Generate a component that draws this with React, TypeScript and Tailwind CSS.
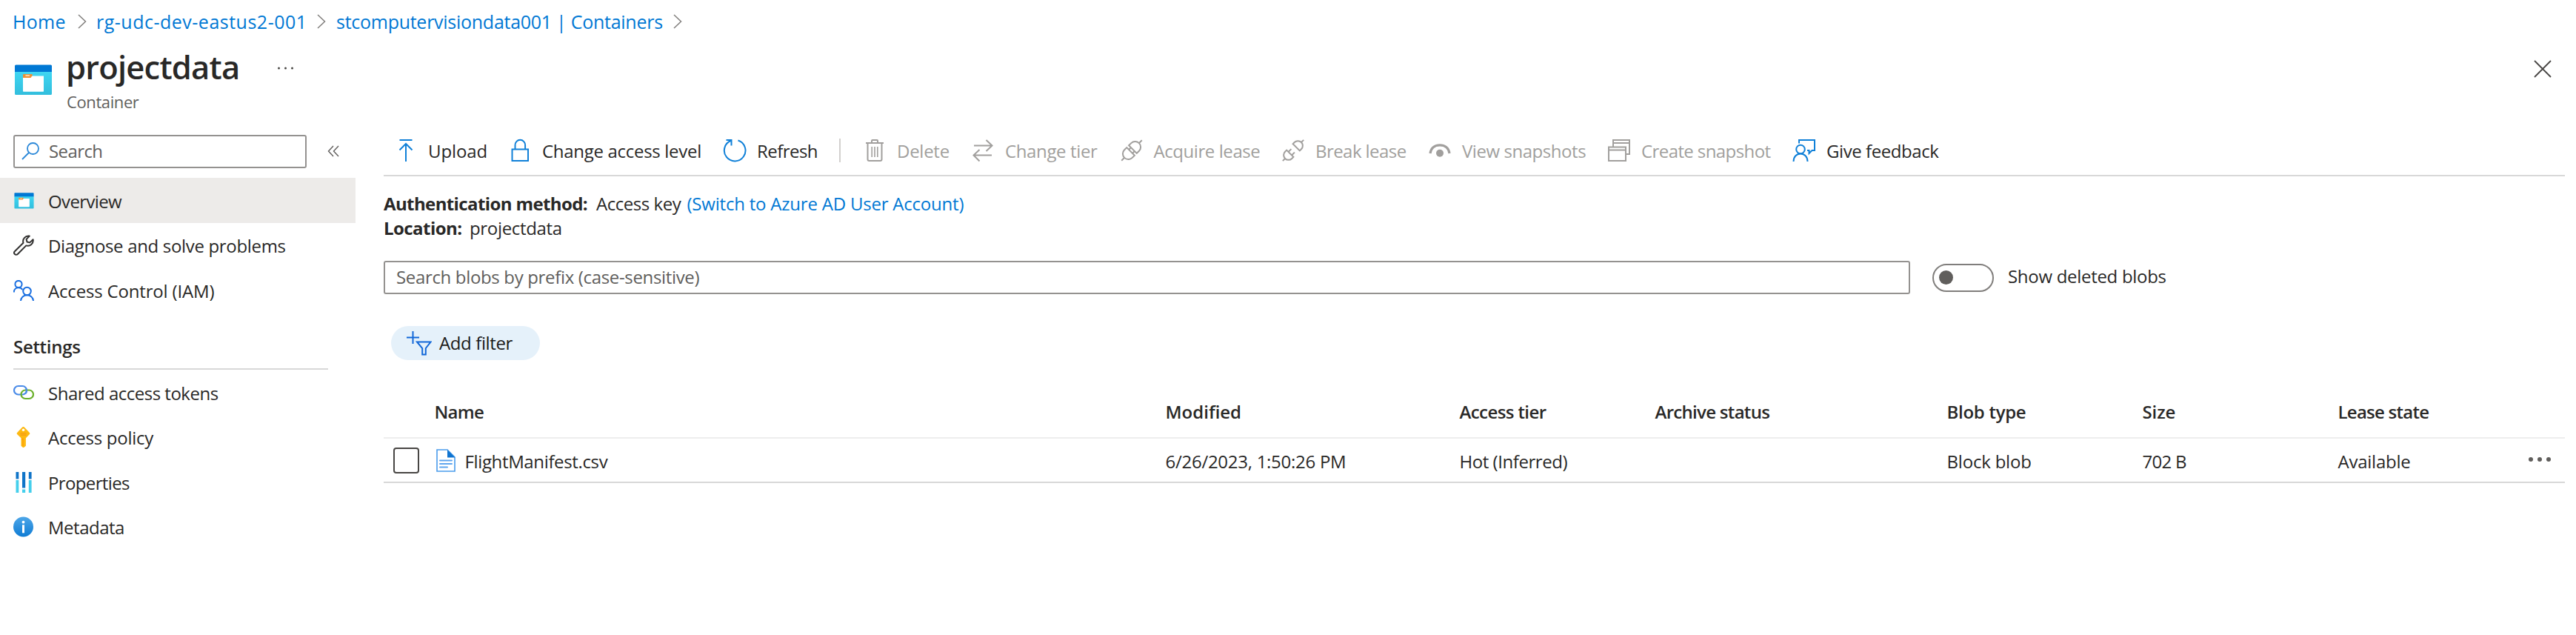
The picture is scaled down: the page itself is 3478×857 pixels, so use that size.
import type { ReactNode } from "react";

function Svg({ className, box = "0 0 32 32", children }: { className: string; box?: string; children: ReactNode }) {
  return (
    <svg className={`shrink-0 ${className}`} viewBox={box} fill="none" aria-hidden="true">
      {children}
    </svg>
  );
}

function ContainerIcon({ className, id }: { className: string; id: string }) {
  return (
    <Svg className={className} box="0 0 50 42">
      <defs>
        <linearGradient id={id} x1="0" y1="0" x2="0" y2="1">
          <stop offset="0" stopColor="#3fd6f2" />
          <stop offset="1" stopColor="#32bedd" />
        </linearGradient>
      </defs>
      <path d="M0 9h50v30.500a1.500 1.500 0 0 1-1.500 1.500h-47A1.500 1.500 0 0 1 0 39.500z" fill={`url(#${id})`} />
      <path d="M1.500 .5h47A1.500 1.500 0 0 1 50 2v8H0V2A1.500 1.500 0 0 1 1.500 .5z" fill="#0078d4" />
      <path d="M11 15.500h28V36a.8.800 0 0 1-.8.800H11.800A.8.800 0 0 1 11 36z" fill="#fff" />
      <path d="M12 13h10.500a1.500 1.500 0 0 1 1.500 1.500L21.500 18H11v-4a1 1 0 0 1 1-1z" fill="#ef9034" />
      <path d="M15 15h4.500" stroke="#fde3c4" strokeWidth="1.500" strokeLinecap="round" />
    </Svg>
  );
}

function Chevron() {
  return (
    <Svg className="h-5 w-3" box="0 0 12 20">
      <path d="M1 1l9.500 9L1 19" stroke="#807e7c" strokeWidth="1.500" />
    </Svg>
  );
}

const toolBlue = "#1080d8";
const toolGray = "#a19f9d";

const icons = {
  upload: (
    <g stroke={toolBlue} strokeWidth="2">
      <path d="M7.500 2h17M16 31V7M7.500 15.500L16 7l8.500 8.500" />
    </g>
  ),
  lock: (
    <g stroke={toolBlue} strokeWidth="2">
      <path d="M5.500 14.500h21.500V30H5.500z" />
      <path d="M9.500 14.500V9a6.800 7.200 0 0 1 13.600 0v5.500" />
    </g>
  ),
  refresh: (
    <g stroke={toolBlue} strokeWidth="2">
      <path d="M20.500 2.500a14.300 14.300 0 1 1-9.500 .3" />
      <path d="M4.500 2h7v7.500" />
    </g>
  ),
  trash: (
    <g stroke={toolGray} strokeWidth="2">
      <path d="M4 6h24M6.500 6v22a2 2 0 0 0 2 2h15a2 2 0 0 0 2-2V6M12 6V3a1 1 0 0 1 1-1h6a1 1 0 0 1 1 1v3" />
      <path d="M12.200 11v14M16 11v14M19.800 11v14" strokeWidth="1.600" />
    </g>
  ),
  tier: (
    <g stroke={toolGray} strokeWidth="2">
      <path d="M4 9.500h24M20.500 2l8 7.500-8 7.500M28 22.500H3.500M11.500 15l-8 7.500 8 8" />
    </g>
  ),
  acquire: (
    <g stroke={toolGray} strokeWidth="2" transform="rotate(-45 16 16)">
      <path d="M-3.500 16h6M29.500 16h6" />
      <path d="M14 8.500H9.500a7.500 7.500 0 0 0 0 15H14zM18 8.500h4.500a7.500 7.500 0 0 1 0 15H18z" />
      <path d="M14 12.500h4M14 19.500h4" />
    </g>
  ),
  breakLease: (
    <g stroke={toolGray} strokeWidth="2" transform="rotate(-45 16 16)">
      <path d="M-4 16h4.500M31.500 16h4.500" />
      <path d="M10 9.500H7a6.500 6.500 0 0 0 0 13h3zM22 9.500h3a6.500 6.500 0 0 1 0 13h-3z" />
      <path d="M10 12.800h5.500M10 19.200h5.500" />
    </g>
  ),
  view: (
    <g>
      <path d="M3 20C4 12.500 9.500 8.800 16 8.800S28 12.500 29 20" stroke={toolGray} strokeWidth="3.200" />
      <circle cx="16" cy="19.800" r="5" fill={toolGray} />
    </g>
  ),
  create: (
    <g stroke={toolGray} strokeWidth="2">
      <path d="M2 11.500h23V30H2zM2 15.500h23" />
      <path d="M8 11V2h22v19h-5M8 6h22" />
    </g>
  ),
  feedback: (
    <g stroke={toolBlue} strokeWidth="2">
      <circle cx="11" cy="14.500" r="5.800" />
      <path d="M1.500 31c0-6.500 4.300-10.500 9.500-10.500s9.500 4 9.500 10.500" />
      <path d="M9 6.500V2h21v14h-3.500l-4 4v-4H20" />
    </g>
  ),
};

const leftTools = [
  { icon: icons.upload, label: "Upload", item: "w-[154px]", text: "tracking-[-0.1px]" },
  { icon: icons.lock, label: "Change access level", item: "w-[290px]", text: "tracking-[-0.3px]" },
  { icon: icons.refresh, label: "Refresh", item: "w-[157px]", text: "tracking-[-0.55px]" },
];

const rightTools = [
  { icon: icons.trash, label: "Delete", item: "w-[146px] text-[#a19f9d]", text: "tracking-[-0.27px]" },
  { icon: icons.tier, label: "Change tier", item: "w-[200.5px] text-[#a19f9d]", text: "tracking-[-0.36px]" },
  { icon: icons.acquire, label: "Acquire lease", item: "w-[218.5px] text-[#a19f9d]", text: "tracking-[-0.43px]" },
  { icon: icons.breakLease, label: "Break lease", item: "w-[198px] text-[#a19f9d]", text: "tracking-[-0.56px]" },
  { icon: icons.view, label: "View snapshots", item: "w-[242px] text-[#a19f9d]", text: "tracking-[-0.45px]" },
  { icon: icons.create, label: "Create snapshot", item: "w-[250px] text-[#a19f9d]", text: "tracking-[-0.59px]" },
  { icon: icons.feedback, label: "Give feedback", item: "w-[220px]", text: "tracking-[-0.43px]" },
];

function Tool({ icon, label, item, text }: { icon: ReactNode; label: string; item: string; text: string }) {
  return (
    <button className={`flex shrink-0 items-center gap-[14px] ${item}`}>
      <Svg className="size-8">{icon}</Svg>
      <span className={`pt-px leading-8 ${text}`}>{label}</span>
    </button>
  );
}

const topNav = [
  { icon: <ContainerIcon className="ml-px h-[22px] w-[27px]" id="nav-container" />, label: "Overview", text: "tracking-[-0.62px]", row: "bg-[#edebe9]" },
  {
    icon: (
      <Svg className="size-7" box="0 0 28 28">
        <path
          d="M21.800 1.600a7.200 7.200 0 0 0-8.300 9.200L1.900 22.200a2.700 2.700 0 0 0 0 3.800 2.700 2.700 0 0 0 3.900 0L17.300 14.400a7.200 7.200 0 0 0 9.300-8.200l-4.400 4.200-3.700-.9-.9-3.600z"
          stroke="#323130"
          strokeWidth="2"
          strokeLinejoin="round"
        />
      </Svg>
    ),
    label: "Diagnose and solve problems",
    text: "tracking-[-0.33px]",
    row: "",
  },
  {
    icon: (
      <Svg className="size-7" box="0 0 28 28">
        <g stroke="#1a6fe0" strokeWidth="2">
          <circle cx="7" cy="5.500" r="4.600" />
          <circle cx="18.500" cy="15" r="5.300" />
          <path d="M.8 16.500C.8 12.500 3.500 10.200 7 10.200c2.300 0 4.200 1 5.300 2.700M10 28c.3-4.500 3.800-7.700 8.500-7.700s8.200 3.200 8.500 7.700" />
        </g>
      </Svg>
    ),
    label: "Access Control (IAM)",
    text: "tracking-[-0.17px]",
    row: "",
  },
];

const settingsNav = [
  {
    icon: (
      <Svg className="size-7" box="0 0 28 28">
        <rect x="1" y="5" width="17" height="11.500" rx="5.700" stroke="#4a8be8" strokeWidth="2.200" />
        <rect x="10.500" y="10.500" width="16.500" height="11.500" rx="5.700" stroke="#6bb02c" strokeWidth="2.200" />
        <path d="M17.200 8.500c1.300 2.500 .8 5-1 6.700" stroke="#4a8be8" strokeWidth="2.200" />
      </Svg>
    ),
    label: "Shared access tokens",
    text: "tracking-[-0.5px]",
  },
  {
    icon: (
      <Svg className="size-7" box="0 0 28 28">
        <path
          d="M12.200 .6a1.800 1.800 0 0 1 2.600 0l6.900 7.100a1.800 1.800 0 0 1 0 2.500l-4.800 5v10.500L13.500 28.500l-3-2.800V15.200l-5.200-5a1.800 1.800 0 0 1 0-2.500z"
          fill="#fdb913"
        />
        <path d="M11 16.500h2v9.500" stroke="#ff9300" strokeWidth="1.300" opacity=".7" />
        <circle cx="13.500" cy="4.200" r="1.800" fill="#fff" />
        <path d="M9.500 8.800h8M9.500 11.200h8" stroke="#f59b16" strokeWidth="1.200" />
      </Svg>
    ),
    label: "Access policy",
    text: "tracking-[-0.27px]",
  },
  {
    icon: (
      <Svg className="size-7" box="0 0 28 28">
        <path d="M3.500 0h3.800v9.500H3.500zM12 0h4.200v21.500H12zM20.800 0h3.800v9.500h-3.800z" fill="#0f74c8" />
        <path d="M3.500 11h3.800v17H3.500zM12 23.500h4.200V28H12zM20.800 11h3.800v17h-3.800z" fill="#45cfec" />
      </Svg>
    ),
    label: "Properties",
    text: "tracking-[-0.63px]",
  },
  {
    icon: (
      <Svg className="size-7" box="0 0 28 28">
        <defs>
          <linearGradient id="info-fill" x1="0" y1="0" x2="0" y2="1">
            <stop offset="0" stopColor="#4da6e8" />
            <stop offset="1" stopColor="#0f7cd4" />
          </linearGradient>
        </defs>
        <circle cx="13.500" cy="14" r="13.500" fill="url(#info-fill)" />
        <circle cx="13.500" cy="7.700" r="1.900" fill="#fff" />
        <path d="M13.500 11.300v11" stroke="#fff" strokeWidth="3" />
      </Svg>
    ),
    label: "Metadata",
    text: "tracking-[-0.49px]",
  },
];

function NavItem({ icon, label, text, row = "" }: { icon: ReactNode; label: string; text: string; row?: string }) {
  return (
    <a className={`flex h-[60.5px] items-center pl-[18px] ${row}`}>
      <span className="flex w-[47px] items-center pt-px">{icon}</span>
      <span className={`pt-[3px] ${text}`}>{label}</span>
    </a>
  );
}

const columns = "grid w-[2945px] grid-cols-[68.500px_987px_397px_264px_394px_264px_264px_1fr] items-center";

export default function App() {
  return (
    <div className="flex h-[857px] w-[3478px] flex-col overflow-hidden bg-white font-['Open_Sans','Noto_Sans',sans-serif] text-[24px] leading-8 text-[#292827]">
      <nav className="flex h-14 items-center pt-px pl-[17px] text-[25px] text-[#0078d4]">
        <a className="w-[88px] tracking-[0.3px]">Home</a>
        <Chevron />
        <a className="ml-[13px] w-[298px] tracking-[0.5px]">rg-udc-dev-eastus2-001</a>
        <Chevron />
        <a className="ml-[14px] w-[455px] tracking-[-0.27px]">stcomputervisiondata001 | Containers</a>
        <Chevron />
      </nav>

      <header className="flex h-[110px] pl-5">
        <ContainerIcon className="mt-[31px] h-[42px] w-[50px]" id="header-container" />
        <div className="ml-[19px] flex flex-col pt-[11px]">
          <h1 className="h-12 w-[284px] text-[43.500px] leading-[48px] font-semibold tracking-[-0.8px]">projectdata</h1>
          <p className="pt-[6px] pl-px text-[22px] leading-8 tracking-[-0.4px] text-[#605e5c]">Container</p>
        </div>
        <Svg className="mt-[33px] h-1.5 w-6" box="0 0 24 6">
          <g fill="#484644">
            <circle cx="3.500" cy="3" r="1.500" />
            <circle cx="12.500" cy="3" r="1.500" />
            <circle cx="21.500" cy="3" r="1.500" />
          </g>
        </Svg>
        <Svg className="mt-[25px] mr-[33px] ml-auto size-6" box="0 0 24 24">
          <path d="M1 1l22 22M23 1L1 23" stroke="#484644" strokeWidth="1.800" />
        </Svg>
      </header>

      <div className="flex min-h-0 flex-1">
        <aside className="w-[480px] shrink-0">
          <div className="flex h-[74px] items-start pt-[15.500px] pl-[18px]">
            <div className="flex h-[45px] w-[396px] items-center rounded-[3px] border-2 border-[#949290] pl-[9px] text-[#605e5c]">
              <Svg className="size-6" box="0 0 24 24">
                <circle cx="15.500" cy="8.500" r="7.500" stroke="#2b88d8" strokeWidth="1.800" />
                <path d="M10 14L1 23" stroke="#2b88d8" strokeWidth="1.800" />
              </Svg>
              <span className="ml-[13px] tracking-[-0.6px]">Search</span>
            </div>
            <Svg className="mt-[14px] ml-7 size-4" box="0 0 16 16">
              <path d="M8 1L1.500 8 8 15M15 1L8.500 8l6.500 7" stroke="#605e5c" strokeWidth="1.400" />
            </Svg>
          </div>
          {topNav.map((n) => (
            <NavItem key={n.label} {...n} />
          ))}
          <h2 className="ml-[18px] h-[77.5px] w-[425px] border-b-2 border-[#d8d8d8] pt-[30px] font-semibold tracking-[-0.3px]">
            Settings
          </h2>
          {settingsNav.map((n) => (
            <NavItem key={n.label} {...n} />
          ))}
        </aside>

        <main className="ml-[38px] w-[2945px]">
          <div className="flex h-[72px] items-center border-b-2 border-[#d8d8d8] pt-1 pl-[14px]">
            {leftTools.map((t) => (
              <Tool key={t.label} {...t} />
            ))}
            <div className="mr-[30px] h-8 w-0.5 bg-[#d2d0ce]" />
            {rightTools.map((t) => (
              <Tool key={t.label} {...t} />
            ))}
          </div>

          <div className="h-[114px] pt-5 leading-[33px]">
            <p className="flex">
              <b className="w-[287px] font-bold tracking-[-0.61px]">Authentication method:</b>
              <span className="w-[122.500px] tracking-[-0.45px]">Access key</span>
              <a className="tracking-[-0.21px] text-[#0078d4]">(Switch to Azure AD User Account)</a>
            </p>
            <p className="flex">
              <b className="w-[116px] font-bold tracking-[-0.55px]">Location:</b>
              <span className="tracking-[-0.34px]">projectdata</span>
            </p>
          </div>

          <div className="flex h-[45px] items-center">
            <div className="flex h-[45px] w-[2061px] items-center rounded-[3px] border-2 border-[#949290] pb-px pl-[15px] tracking-[-0.34px] text-[#605e5c]">
              Search blobs by prefix (case-sensitive)
            </div>
            <div className="ml-[30px] flex h-[38px] w-[83px] items-center rounded-full border-2 border-[#807e7c] pl-[7px]">
              <div className="size-[19px] rounded-full bg-[#605e5c]" />
            </div>
            <span className="-mt-[3px] ml-[19px] tracking-[-0.3px]">Show deleted blobs</span>
          </div>

          <button className="mt-[43px] ml-[10px] flex h-[46px] w-[200.500px] items-center rounded-full bg-[#e5f1fa] pl-5 text-[#1b1a19]">
            <Svg className="h-[34px] w-[35px]" box="0 0 35 34">
              <g stroke="#1268d8" strokeWidth="2">
                <path d="M9.500 1v17M1 9.500h17" />
                <path d="M15 15.500h18.500l-6.700 8.500v8.500h-4.600V24z" />
              </g>
            </Svg>
            <span className="-mt-px ml-[10px] tracking-[-0.39px]">Add filter</span>
          </button>

          <div className={`${columns} mt-[34px] h-[72px] border-b-2 border-[#eeeeee] pt-0.5 font-semibold`}>
            <span />
            <span className="tracking-[-0.73px]">Name</span>
            <span>Modified</span>
            <span className="tracking-[-0.6px]">Access tier</span>
            <span className="tracking-[-0.7px]">Archive status</span>
            <span className="tracking-[-0.28px]">Blob type</span>
            <span className="tracking-[-0.1px]">Size</span>
            <span className="tracking-[-0.74px]">Lease state</span>
          </div>

          <div className={`${columns} h-[60px] border-b-2 border-[#d8d8d8]`}>
            <span className="ml-[13px] size-[35px] rounded-[4px] border-2 border-[#484644]" />
            <span className="flex items-center pl-0.5">
              <Svg className="h-[31px] w-[26px]" box="0 0 26 31">
                <path d="M1 1h14l10 10v19H1z" fill="#fff" stroke="#4a9cec" strokeWidth="1.600" />
                <path d="M15 1l10.500 10.500H15z" fill="#0f74d0" />
                <path d="M5 15.500h16M5 20h16M5 24.500h10" stroke="#5ea5ee" strokeWidth="2" strokeLinecap="round" />
              </Svg>
              <span className="ml-[13px] pt-[3px] tracking-[-0.36px]">FlightManifest.csv</span>
            </span>
            <span className="pt-[3px] tracking-[-0.27px]">6/26/2023, 1:50:26 PM</span>
            <span className="pt-[3px] tracking-[-0.45px]">Hot (Inferred)</span>
            <span />
            <span className="pt-[3px] tracking-[-0.2px]">Block blob</span>
            <span className="pt-[3px] tracking-[-0.75px]">702 B</span>
            <span className="flex items-center justify-between pr-[18px]">
              <span className="pt-[3px] tracking-[-0.24px]">Available</span>
              <Svg className="-mt-0.5 h-2 w-8" box="0 0 32 8">
                <g fill="#605e5c">
                  <circle cx="4" cy="4" r="3" />
                  <circle cx="16" cy="4" r="3" />
                  <circle cx="28" cy="4" r="3" />
                </g>
              </Svg>
            </span>
          </div>
        </main>
      </div>
    </div>
  );
}
